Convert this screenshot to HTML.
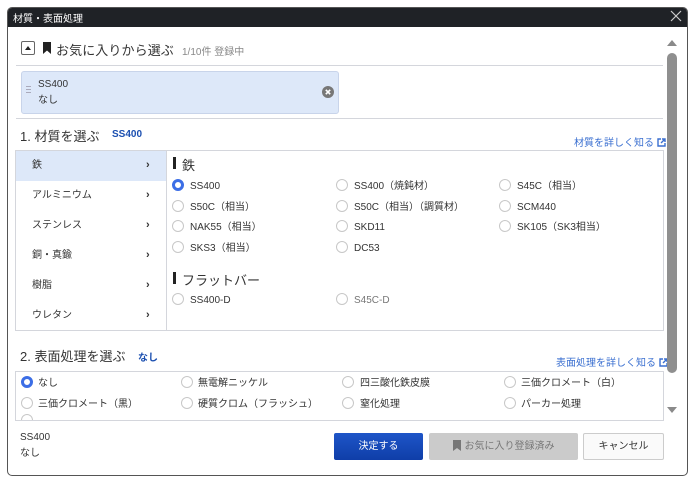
<!DOCTYPE html>
<html><head><meta charset="utf-8"><style>
*{margin:0;padding:0;box-sizing:border-box}
body{width:691px;height:478px;background:#fff;position:relative;overflow:hidden;font-family:"Liberation Sans","Noto Sans CJK JP",sans-serif;color:#333}
.a{position:absolute;white-space:nowrap}
.dlg{position:absolute;left:7px;top:7px;width:681px;height:469px;border:1px solid #555;border-radius:5px;overflow:hidden;background:#fff}
.tb{position:absolute;left:0;top:0;width:100%;height:19px;background:#1f2226}
.hl{position:absolute;height:1px;background:#d4d6dc}
.r{position:absolute;width:12px;height:12px;border:1px solid #c8c8c8;border-radius:50%;background:#fff}
.r.on{border:3px solid #3c6ee6}
.t{font-size:10px;color:#333;position:absolute;white-space:nowrap;line-height:12px}
.o{transform:translateY(2px)}
.mi{position:absolute;left:16px;width:150px;height:30px;font-size:10px;line-height:30px;padding-left:16px}
.mi:after{content:"›";position:absolute;left:130px;top:-1px;font-weight:bold;font-size:11px}
.ext{display:inline-block;vertical-align:-1px;margin-left:3px}
</style></head><body>
<div class="dlg">
<div class="tb"></div>
</div>
<div class="a" style="left:13px;top:10px;font-size:10px;color:#fff">材質・表面処理</div>
<svg class="a" style="left:670px;top:10px" width="12" height="12"><path d="M1 1L11 11M11 1L1 11" stroke="#ccc" stroke-width="1.2"/></svg>

<div class="a" style="left:21px;top:41px;width:14px;height:14px;border:1px solid #666;border-radius:2px"></div>
<svg class="a" style="left:24px;top:44px" width="8" height="8"><path d="M1 6L4 2L7 6Z" fill="#222"/></svg>
<svg class="a" style="left:42px;top:41px" width="10" height="14"><path d="M1 1H9V13L5 9.5L1 13Z" fill="#222"/></svg>
<div class="a" style="left:56px;top:40px;font-size:13px;letter-spacing:0.1px;color:#333">お気に入りから選ぶ</div>
<div class="a" style="left:182px;top:43px;font-size:10px;color:#888">1/10件 登録中</div>
<div class="hl" style="left:16px;top:65px;width:647px"></div>

<div class="a" style="left:21px;top:71px;width:318px;height:43px;background:#dde8f9;border:1px solid #c8d4ea;border-radius:3px"></div>
<div class="a" style="left:26px;top:86px;width:5px;height:1px;background:#aab;box-shadow:0 3px 0 #aab,0 6px 0 #aab"></div>
<div class="t" style="left:38px;top:79px">SS400</div>
<div class="t" style="left:38px;top:95px">なし</div>
<svg class="a" style="left:322px;top:86px" width="12" height="12"><circle cx="6" cy="6" r="6" fill="#777"/><path d="M3.8 3.8L8.2 8.2M8.2 3.8L3.8 8.2" stroke="#fff" stroke-width="1.6"/></svg>
<div class="hl" style="left:16px;top:118px;width:647px"></div>

<div class="a" style="left:20px;top:126px;font-size:13px;color:#333">1. 材質を選ぶ</div>
<div class="a" style="left:112px;top:129px;font-size:10px;color:#1b4fb0;font-weight:bold">SS400</div>
<div class="a" style="left:574px;top:134px;font-size:10px;color:#3a6fd0">材質を詳しく知る<svg class="ext" width="9" height="9"><path d="M4 1H1V8H8V5M5 1H8V4M8 1L4 5" stroke="#3a6fd0" stroke-width="1.4" fill="none"/></svg></div>

<div class="a" style="left:15px;top:150px;width:649px;height:181px;border:1px solid #d4d6dc"></div>
<div class="a" style="left:166px;top:150px;width:1px;height:181px;background:#d4d6dc"></div>
<div class="mi" style="top:151px;background:#dde8f9">鉄</div>
<div class="mi" style="top:181px">アルミニウム</div>
<div class="mi" style="top:211px">ステンレス</div>
<div class="mi" style="top:241px">銅・真鍮</div>
<div class="mi" style="top:271px">樹脂</div>
<div class="mi" style="top:301px">ウレタン</div>

<div class="a" style="left:173px;top:157px;width:3px;height:12px;background:#222"></div>
<div class="a" style="left:182px;top:155px;font-size:13px">鉄</div>
<div class="r on" style="left:172px;top:179px"></div><div class="t o" style="left:190px;top:179px">SS400</div>
<div class="r" style="left:336px;top:179px"></div><div class="t o" style="left:354px;top:179px">SS400（焼鈍材）</div>
<div class="r" style="left:499px;top:179px"></div><div class="t o" style="left:517px;top:179px">S45C（相当）</div>
<div class="r" style="left:172px;top:200px"></div><div class="t o" style="left:190px;top:200px">S50C（相当）</div>
<div class="r" style="left:336px;top:200px"></div><div class="t o" style="left:354px;top:200px">S50C（相当）（調質材）</div>
<div class="r" style="left:499px;top:200px"></div><div class="t o" style="left:517px;top:200px">SCM440</div>
<div class="r" style="left:172px;top:220px"></div><div class="t o" style="left:190px;top:220px">NAK55（相当）</div>
<div class="r" style="left:336px;top:220px"></div><div class="t o" style="left:354px;top:220px">SKD11</div>
<div class="r" style="left:499px;top:220px"></div><div class="t o" style="left:517px;top:220px">SK105（SK3相当）</div>
<div class="r" style="left:172px;top:241px"></div><div class="t o" style="left:190px;top:241px">SKS3（相当）</div>
<div class="r" style="left:336px;top:241px"></div><div class="t o" style="left:354px;top:241px">DC53</div>

<div class="a" style="left:173px;top:272px;width:3px;height:12px;background:#222"></div>
<div class="a" style="left:182px;top:270px;font-size:13px">フラットバー</div>
<div class="r" style="left:172px;top:293px"></div><div class="t o" style="left:190px;top:293px">SS400-D</div>
<div class="r" style="left:336px;top:293px"></div><div class="t o" style="left:354px;top:293px;color:#777">S45C-D</div>

<div class="a" style="left:20px;top:346px;font-size:13px">2. 表面処理を選ぶ</div>
<div class="a" style="left:138px;top:349px;font-size:10px;color:#1b4fb0;font-weight:bold">なし</div>
<div class="a" style="left:556px;top:354px;font-size:10px;color:#3a6fd0">表面処理を詳しく知る<svg class="ext" width="9" height="9"><path d="M4 1H1V8H8V5M5 1H8V4M8 1L4 5" stroke="#3a6fd0" stroke-width="1.4" fill="none"/></svg></div>

<div class="a" style="left:15px;top:371px;width:649px;height:50px;border:1px solid #d4d6dc;overflow:hidden">
<div class="r" style="left:5px;top:42px"></div></div>
<div class="r on" style="left:21px;top:376px"></div><div class="t o" style="left:38px;top:376px">なし</div>
<div class="r" style="left:181px;top:376px"></div><div class="t o" style="left:198px;top:376px">無電解ニッケル</div>
<div class="r" style="left:342px;top:376px"></div><div class="t o" style="left:360px;top:376px">四三酸化鉄皮膜</div>
<div class="r" style="left:504px;top:376px"></div><div class="t o" style="left:521px;top:376px">三価クロメート（白）</div>
<div class="r" style="left:21px;top:397px"></div><div class="t o" style="left:38px;top:397px">三価クロメート（黒）</div>
<div class="r" style="left:181px;top:397px"></div><div class="t o" style="left:198px;top:397px">硬質クロム（フラッシュ）</div>
<div class="r" style="left:342px;top:397px"></div><div class="t o" style="left:360px;top:397px">窒化処理</div>
<div class="r" style="left:504px;top:397px"></div><div class="t o" style="left:521px;top:397px">パーカー処理</div>

<svg class="a" style="left:666px;top:38px" width="12" height="10"><path d="M1 8L6 2L11 8Z" fill="#8a8a8a"/></svg>
<div class="a" style="left:667px;top:53px;width:10px;height:320px;background:#8f8f8f;border-radius:5px"></div>
<svg class="a" style="left:666px;top:405px" width="12" height="10"><path d="M1 2L6 8L11 2Z" fill="#8a8a8a"/></svg>

<div class="t" style="left:20px;top:432px">SS400</div>
<div class="t" style="left:20px;top:448px">なし</div>
<div class="a" style="left:334px;top:433px;width:89px;height:27px;background:linear-gradient(#1e55c8,#0f3ea8);border-radius:2px;color:#fff;font-size:10px;text-align:center;line-height:27px">決定する</div>
<div class="a" style="left:429px;top:433px;width:149px;height:27px;background:#cbcbcb;border-radius:2px;color:#777;font-size:10px;text-align:center;line-height:27px"><svg width="8" height="11" style="vertical-align:-2px;margin-right:4px"><path d="M0 0H8V11L4 8L0 11Z" fill="#777"/></svg>お気に入り登録済み</div>
<div class="a" style="left:583px;top:433px;width:81px;height:27px;background:#fafafa;border:1px solid #ccc;border-radius:2px;color:#333;font-size:10px;text-align:center;line-height:25px">キャンセル</div>
</body></html>
